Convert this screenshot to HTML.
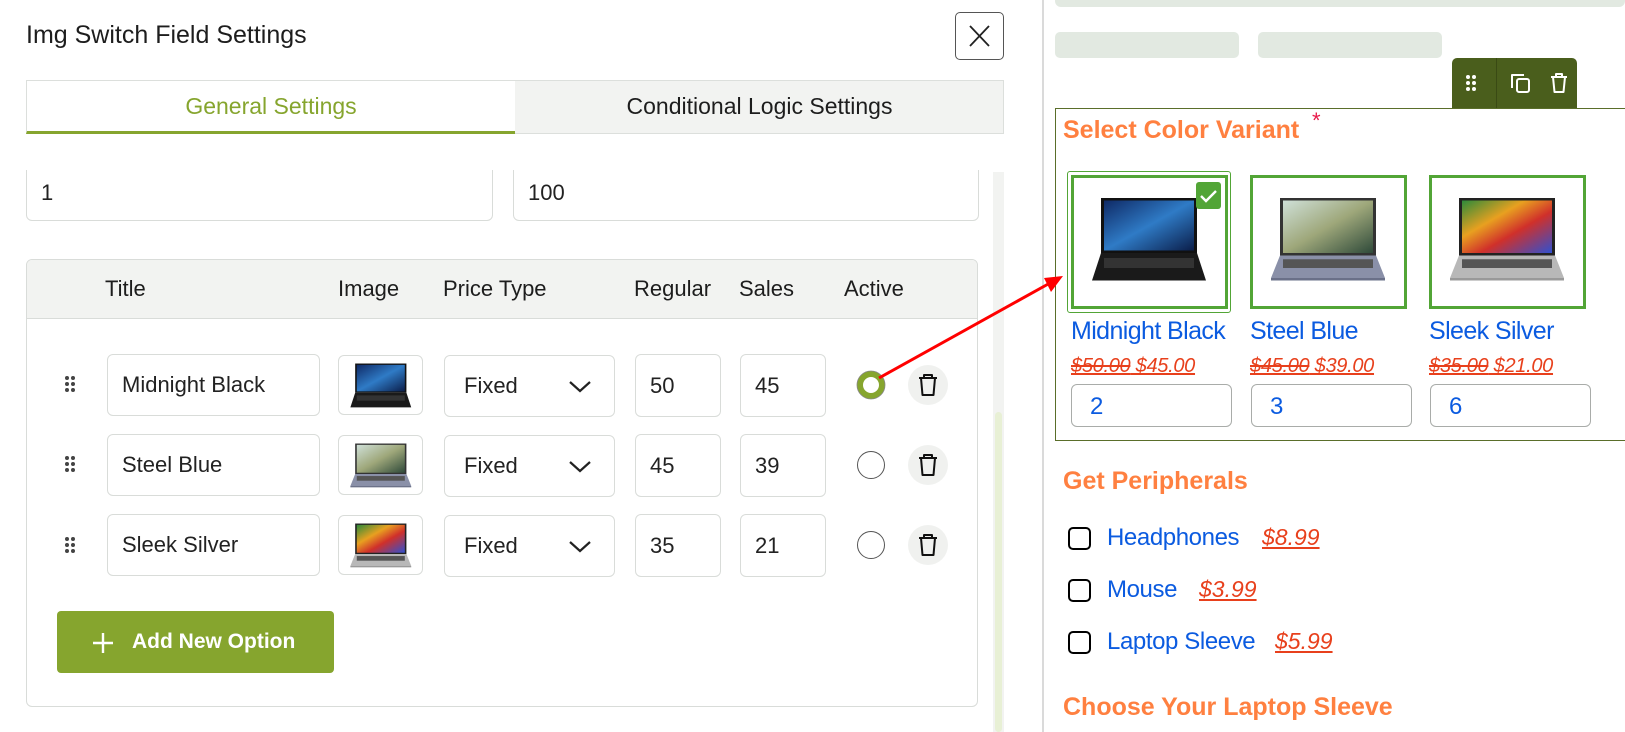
<!DOCTYPE html>
<html><head><meta charset="utf-8">
<style>
*{box-sizing:border-box;margin:0;padding:0}
body{width:1625px;height:732px;overflow:hidden;background:#fff;font-family:"Liberation Sans",sans-serif;position:relative;color:#1d1d1d}
.a{position:absolute}
.inp{position:absolute;border:1px solid #d9dcd9;border-radius:6px;background:#fff;font-size:22px;color:#222;display:flex;align-items:center;padding-left:14px}
.hd{position:absolute;top:276px;font-size:22px;color:#1d1d1d}
.card{position:absolute;top:175px;width:157px;height:134px;border:3px solid #52a536;background:#fff}
.lbl{position:absolute;top:317px;font-size:25px;color:#0b5be0;letter-spacing:-0.6px}
.pr{position:absolute;top:355px;font-size:20px;color:#e8401c;font-style:italic;text-decoration:underline;letter-spacing:-0.3px}
.qty{position:absolute;top:384px;width:161px;height:43px;border:1px solid #a9aca9;border-radius:6px;font-size:24px;color:#0b5be0;padding:8px 0 0 18px}
.cb{position:absolute;left:1068px;width:23px;height:23px;border:2.5px solid #000;border-radius:5px}
.pl{position:absolute;left:1107px;font-size:24px;color:#0b5be0;letter-spacing:-0.4px}
.pp{position:absolute;font-size:23px;color:#e8401c;font-style:italic;text-decoration:underline}
.ot{position:absolute;left:1063px;font-size:25px;font-weight:bold;color:#ff8040}
</style></head><body>

<div class="a" style="left:26px;top:21px;font-size:25px;color:#1d1d1d">Img Switch Field Settings</div>
<div class="a" style="left:955px;top:12px;width:49px;height:48px;border:1px solid #555;border-radius:5px">
<svg width="47" height="46" viewBox="0 0 47 46"><path d="M14 13L33 33M33 13L14 33" stroke="#222" stroke-width="1.8"/></svg></div>

<div class="a" style="left:26px;top:80px;width:978px;height:54px;border:1px solid #dcdfdc;background:#f2f3f1"></div>
<div class="a" style="left:26px;top:80px;width:489px;height:54px;background:#fff;border-top:1px solid #dcdfdc;border-left:1px solid #dcdfdc;border-bottom:3px solid #86a52e;color:#86a52e;font-size:23px;text-align:center;line-height:50px">General Settings</div>
<div class="a" style="left:515px;top:80px;width:489px;height:54px;font-size:23px;text-align:center;line-height:52px;color:#1d1d1d">Conditional Logic Settings</div>

<div class="a" style="left:0;top:170px;width:990px;height:562px;overflow:hidden">
 <div class="inp" style="left:26px;top:-10px;width:467px;height:61px;align-items:flex-end;padding-bottom:14px">1</div>
 <div class="inp" style="left:513px;top:-10px;width:466px;height:61px;align-items:flex-end;padding-bottom:14px">100</div>
</div>
<div class="a" style="left:993px;top:172px;width:11px;height:560px;background:#f2f3f1"></div>
<div class="a" style="left:995px;top:412px;width:7px;height:320px;background:#e8f0d5;border-radius:4px"></div>

<div class="a" style="left:26px;top:259px;width:952px;height:448px;border:1px solid #d9dcd9;border-radius:6px;background:#fff;overflow:hidden">
 <div style="height:59px;background:#f2f3f1;border-bottom:1px solid #d9dcd9"></div>
</div>
<div class="hd" style="left:105px">Title</div>
<div class="hd" style="left:338px">Image</div>
<div class="hd" style="left:443px">Price Type</div>
<div class="hd" style="left:634px">Regular</div>
<div class="hd" style="left:739px">Sales</div>
<div class="hd" style="left:844px">Active</div>

<svg class="a" style="left:0;top:0" width="1625" height="732">
 <defs>
  <linearGradient id="s1" x1="0" y1="0" x2="1" y2="1"><stop offset="0" stop-color="#0f2a66"/><stop offset=".5" stop-color="#2f7bc6"/><stop offset="1" stop-color="#0b1e4a"/></linearGradient>
  <linearGradient id="s2" x1="0" y1="0" x2="1" y2="1"><stop offset="0" stop-color="#cfe0d8"/><stop offset=".5" stop-color="#9ea77a"/><stop offset="1" stop-color="#2f4a3a"/></linearGradient>
  <linearGradient id="s3" x1="0" y1="0" x2="1" y2="1"><stop offset="0" stop-color="#2d8a3a"/><stop offset=".35" stop-color="#e8a020"/><stop offset=".6" stop-color="#d0302a"/><stop offset="1" stop-color="#3050d0"/></linearGradient>
  <g id="lap1"><rect x="8" y="0" width="64" height="44" fill="#111"/><rect x="10" y="2" width="60" height="40" fill="url(#s1)"/><path d="M8 44H72L78 66H2Z" fill="#1a1a1a"/><rect x="10" y="48" width="60" height="8" fill="#333"/></g>
  <g id="lap2"><rect x="8" y="0" width="64" height="46" fill="#333"/><rect x="10" y="2" width="60" height="42" fill="url(#s2)"/><path d="M8 46H72L78 64H2Z" fill="#8a90a8"/><rect x="10" y="49" width="60" height="7" fill="#555"/><rect x="2" y="64" width="76" height="2" fill="#6a7088"/></g>
  <g id="lap3"><rect x="8" y="0" width="64" height="46" fill="#222"/><rect x="10" y="2" width="60" height="42" fill="url(#s3)"/><path d="M8 46H72L78 64H2Z" fill="#b8b8b8"/><rect x="10" y="49" width="60" height="7" fill="#555"/><rect x="2" y="64" width="76" height="2" fill="#999"/></g>
 </defs>
 <g fill="#444">
  <circle cx="67" cy="378" r="2"/><circle cx="73" cy="378" r="2"/><circle cx="67" cy="384" r="2"/><circle cx="73" cy="384" r="2"/><circle cx="67" cy="390" r="2"/><circle cx="73" cy="390" r="2"/>
  <circle cx="67" cy="458" r="2"/><circle cx="73" cy="458" r="2"/><circle cx="67" cy="464" r="2"/><circle cx="73" cy="464" r="2"/><circle cx="67" cy="470" r="2"/><circle cx="73" cy="470" r="2"/>
  <circle cx="67" cy="539" r="2"/><circle cx="73" cy="539" r="2"/><circle cx="67" cy="545" r="2"/><circle cx="73" cy="545" r="2"/><circle cx="67" cy="551" r="2"/><circle cx="73" cy="551" r="2"/>
 </g>
</svg>

<div class="inp" style="left:107px;top:354px;width:213px;height:62px">Midnight Black</div>
<div class="inp" style="left:107px;top:434px;width:213px;height:62px">Steel Blue</div>
<div class="inp" style="left:107px;top:514px;width:213px;height:62px">Sleek Silver</div>

<div class="inp" style="left:338px;top:355px;width:85px;height:60px;padding:0"><svg width="85" height="60" viewBox="0 0 85 60"><use href="#lap1" transform="translate(10,8) scale(.82,.68)"/></svg></div>
<div class="inp" style="left:338px;top:435px;width:85px;height:60px;padding:0"><svg width="85" height="60" viewBox="0 0 85 60"><use href="#lap2" transform="translate(10,8) scale(.82,.68)"/></svg></div>
<div class="inp" style="left:338px;top:515px;width:85px;height:60px;padding:0"><svg width="85" height="60" viewBox="0 0 85 60"><use href="#lap3" transform="translate(10,8) scale(.82,.68)"/></svg></div>

<div class="inp" style="left:444px;top:355px;width:171px;height:62px;padding-left:19px">Fixed<svg style="position:absolute;left:123px;top:24px" width="24" height="14"><path d="M2 2L12 11L22 2" stroke="#222" stroke-width="2.2" fill="none"/></svg></div>
<div class="inp" style="left:444px;top:435px;width:171px;height:62px;padding-left:19px">Fixed<svg style="position:absolute;left:123px;top:24px" width="24" height="14"><path d="M2 2L12 11L22 2" stroke="#222" stroke-width="2.2" fill="none"/></svg></div>
<div class="inp" style="left:444px;top:515px;width:171px;height:62px;padding-left:19px">Fixed<svg style="position:absolute;left:123px;top:24px" width="24" height="14"><path d="M2 2L12 11L22 2" stroke="#222" stroke-width="2.2" fill="none"/></svg></div>

<div class="inp" style="left:635px;top:354px;width:86px;height:63px">50</div>
<div class="inp" style="left:635px;top:434px;width:86px;height:63px">45</div>
<div class="inp" style="left:635px;top:514px;width:86px;height:63px">35</div>
<div class="inp" style="left:740px;top:354px;width:86px;height:63px">45</div>
<div class="inp" style="left:740px;top:434px;width:86px;height:63px">39</div>
<div class="inp" style="left:740px;top:514px;width:86px;height:63px">21</div>

<svg class="a" style="left:0;top:0" width="1625" height="732">
 <circle cx="871" cy="385" r="11" fill="#fff" stroke="#86a52e" stroke-width="6"/>
 <circle cx="871" cy="385" r="14" fill="none" stroke="#888" stroke-width="0.8"/>
 <circle cx="871" cy="465" r="13.5" fill="#fff" stroke="#555" stroke-width="1"/>
 <circle cx="871" cy="545" r="13.5" fill="#fff" stroke="#555" stroke-width="1"/>
 <g fill="#f0f1ef"><circle cx="928" cy="385" r="20"/><circle cx="928" cy="465" r="20"/><circle cx="928" cy="545" r="20"/></g>
 <g stroke="#111" stroke-width="2" fill="none" stroke-linejoin="round">
  <path d="M919 378H937M924 378V375H932V378M921 378L922.5 395H933.5L935 378"/>
  <path d="M919 458H937M924 458V455H932V458M921 458L922.5 475H933.5L935 458"/>
  <path d="M919 538H937M924 538V535H932V538M921 538L922.5 555H933.5L935 538"/>
 </g>
</svg>

<div class="a" style="left:57px;top:611px;width:277px;height:62px;background:#86a52e;border-radius:4px;color:#fff;font-size:21px;font-weight:bold;line-height:62px;padding-left:75px">Add New Option</div>
<svg class="a" style="left:92px;top:632px" width="22" height="22"><path d="M11 1V21M1 11H21" stroke="#fff" stroke-width="2.4"/></svg>

<div class="a" style="left:1042px;top:0;width:2px;height:732px;background:#dadada"></div>
<div class="a" style="left:1044px;top:0;width:581px;height:732px;background:#fff"></div>
<div class="a" style="left:1055px;top:0;width:570px;height:7px;background:#e2e9e1;border-radius:0 0 6px 6px"></div>
<div class="a" style="left:1055px;top:32px;width:184px;height:26px;background:#e2e9e1;border-radius:5px"></div>
<div class="a" style="left:1258px;top:32px;width:184px;height:26px;background:#e2e9e1;border-radius:5px"></div>

<div class="a" style="left:1452px;top:58px;width:125px;height:50px;background:#4a5e1c;border-radius:5px 5px 0 0"></div>
<div class="a" style="left:1496px;top:58px;width:1px;height:50px;background:#3a4a14"></div>
<svg class="a" style="left:1452px;top:58px" width="125" height="50">
 <g fill="#fff"><circle cx="16" cy="19" r="2"/><circle cx="22" cy="19" r="2"/><circle cx="16" cy="25" r="2"/><circle cx="22" cy="25" r="2"/><circle cx="16" cy="31" r="2"/><circle cx="22" cy="31" r="2"/></g>
 <g stroke="#fff" stroke-width="2" fill="none" stroke-linejoin="round">
  <rect x="65" y="21" width="12" height="13" rx="2"/><path d="M60 30V17H72"/>
  <path d="M99 19H115M104 19V16H110V19M101 19L102.5 34H111.5L113 19"/>
 </g>
</svg>

<div class="a" style="left:1055px;top:108px;width:580px;height:333px;border:1px solid #5a6e2a"></div>
<div class="ot" style="top:116px">Select Color Variant</div>
<div class="a" style="left:1312px;top:108px;color:#e8194a;font-size:22px">*</div>

<div class="a" style="left:1067px;top:171px;width:164px;height:142px;border:1px solid #52a536;border-radius:3px"></div>
<div class="card" style="left:1071px"><svg width="151" height="128"><use href="#lap1" transform="translate(15,20) scale(1.5,1.25)"/></svg>
 <div class="a" style="left:122px;top:4px;width:25px;height:27px;background:#52a536;border-radius:3px"><svg width="25" height="27"><path d="M5 14L10 19L20 9" stroke="#fff" stroke-width="2.4" fill="none"/></svg></div></div>
<div class="card" style="left:1250px"><svg width="151" height="128"><use href="#lap2" transform="translate(15,20) scale(1.5,1.25)"/></svg></div>
<div class="card" style="left:1429px"><svg width="151" height="128"><use href="#lap3" transform="translate(15,20) scale(1.5,1.25)"/></svg></div>

<div class="lbl" style="left:1071px">Midnight Black</div>
<div class="lbl" style="left:1250px">Steel Blue</div>
<div class="lbl" style="left:1429px">Sleek Silver</div>
<div class="pr" style="left:1071px"><s>$50.00</s> $45.00</div>
<div class="pr" style="left:1250px"><s>$45.00</s> $39.00</div>
<div class="pr" style="left:1429px"><s>$35.00</s> $21.00</div>
<div class="qty" style="left:1071px">2</div>
<div class="qty" style="left:1251px">3</div>
<div class="qty" style="left:1430px">6</div>

<div class="ot" style="top:467px">Get Peripherals</div>
<div class="cb" style="top:527px"></div><div class="pl" style="top:524px">Headphones</div><div class="pp" style="left:1262px;top:524px">$8.99</div>
<div class="cb" style="top:579px"></div><div class="pl" style="top:576px">Mouse</div><div class="pp" style="left:1199px;top:576px">$3.99</div>
<div class="cb" style="top:631px"></div><div class="pl" style="top:628px">Laptop Sleeve</div><div class="pp" style="left:1275px;top:628px">$5.99</div>
<div class="ot" style="top:693px">Choose Your Laptop Sleeve</div>

<svg class="a" style="left:0;top:0" width="1625" height="732">
 <path d="M879 378L1050 283" stroke="#f00" stroke-width="3"/>
 <path d="M1063 276L1044 278L1051 292Z" fill="#f00"/>
</svg>
</body></html>
